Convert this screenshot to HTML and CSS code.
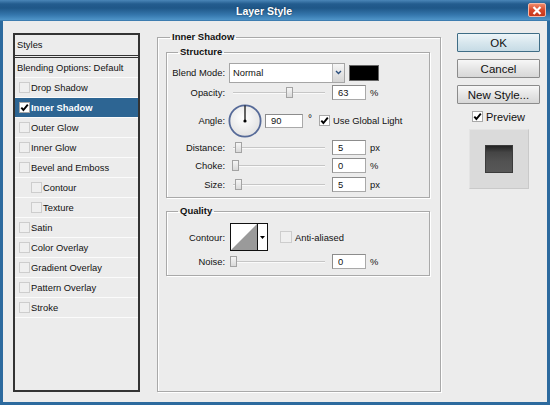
FILE: index.html
```html
<!DOCTYPE html>
<html lang="en">

<head>
    <meta charset="UTF-8">
    <meta name="viewport" content="width=device-width, initial-scale=1.0">
    <title>Layer Style</title>
    <link rel="stylesheet" href="styles.css">
</head>

<body>

    <div class="window">
        <div class="titlebar">
            <span class="title">Layer Style</span>
            <span class="close">
                <svg width="10" height="9" viewBox="0 0 10 9"><path d="M1.5 1 L8.5 8 M8.5 1 L1.5 8" stroke="#fff" stroke-width="2.2" fill="none"/></svg>
            </span>
        </div>

        <div class="content">
            <!-- Liste des styles -->
            <ul class="styles-list">
                <li class="head">Styles</li>
                <li class="blending">Blending Options: Default</li>
                <li><span class="cb"></span>Drop Shadow</li>
                <li class="selected"><span class="cb checked"><svg width="9" height="9" viewBox="0 0 9 9"><path d="M1.3 4.6 L3.4 7 L7.8 1.6" stroke="#000" stroke-width="1.9" fill="none"/></svg></span>Inner Shadow</li>
                <li><span class="cb"></span>Outer Glow</li>
                <li><span class="cb"></span>Inner Glow</li>
                <li><span class="cb"></span>Bevel and Emboss</li>
                <li class="sub"><span class="cb"></span>Contour</li>
                <li class="sub"><span class="cb"></span>Texture</li>
                <li><span class="cb"></span>Satin</li>
                <li><span class="cb"></span>Color Overlay</li>
                <li><span class="cb"></span>Gradient Overlay</li>
                <li><span class="cb"></span>Pattern Overlay</li>
                <li><span class="cb"></span>Stroke</li>
            </ul>

            <!-- Panneau Inner Shadow -->
            <fieldset class="group main-group">
                <legend>Inner Shadow</legend>

                <fieldset class="group structure">
                    <legend>Structure</legend>

                    <div class="field field-blend">
                        <label class="field-label">Blend Mode:</label>
                        <div class="select">
                            <span class="select-value">Normal</span>
                            <span class="select-arrow"><svg width="7" height="5" viewBox="0 0 7 5"><path d="M1 1 L3.5 3.5 L6 1" stroke="#2b4f7e" stroke-width="1.4" fill="none"/></svg></span>
                        </div>
                        <span class="swatch"></span>
                    </div>

                    <div class="field">
                        <label class="field-label">Opacity:</label>
                        <div class="slider"><span class="thumb" style="left: 57px"></span></div>
                        <input class="num" type="text" value="63">
                        <span class="unit">%</span>
                    </div>

                    <div class="field field-angle">
                        <label class="field-label">Angle:</label>
                        <svg class="dial" width="34" height="34" viewBox="0 0 34 34">
                            <defs>
                                <radialGradient id="dialFill" cx="0.45" cy="0.4" r="0.6">
                                    <stop offset="0" stop-color="#ffffff"/>
                                    <stop offset="1" stop-color="#e2e2e2"/>
                                </radialGradient>
                            </defs>
                            <circle cx="17" cy="17" r="15.6" fill="url(#dialFill)" stroke="#566a98" stroke-width="1.8"/>
                            <line x1="17" y1="17" x2="17" y2="1.5" stroke="#000" stroke-width="1.2"/>
                            <circle cx="17" cy="17" r="1.6" fill="#000"/>
                        </svg>
                        <input class="num num-angle" type="text" value="90">
                        <span class="unit deg">°</span>
                        <span class="cb cb-light checked"><svg width="9" height="9" viewBox="0 0 9 9"><path d="M1.3 4.6 L3.4 7 L7.8 1.6" stroke="#000" stroke-width="1.9" fill="none"/></svg></span>
                        <span class="check-label">Use Global Light</span>
                    </div>

                    <div class="field">
                        <label class="field-label">Distance:</label>
                        <div class="slider"><span class="thumb" style="left: 6px"></span></div>
                        <input class="num" type="text" value="5">
                        <span class="unit">px</span>
                    </div>

                    <div class="field field-choke">
                        <label class="field-label">Choke:</label>
                        <div class="slider"><span class="thumb" style="left: 3px"></span></div>
                        <input class="num" type="text" value="0">
                        <span class="unit">%</span>
                    </div>

                    <div class="field field-size">
                        <label class="field-label">Size:</label>
                        <div class="slider"><span class="thumb" style="left: 6px"></span></div>
                        <input class="num" type="text" value="5">
                        <span class="unit">px</span>
                    </div>
                </fieldset>

                <fieldset class="group quality">
                    <legend>Quality</legend>

                    <div class="field field-contour">
                        <label class="field-label">Contour:</label>
                        <div class="contour">
                            <svg class="contour-curve" width="26" height="26" viewBox="0 0 26 26"><polygon points="0,26 26,0 26,26" fill="#9a9a9a"/></svg>
                            <span class="contour-arrow"><svg width="5" height="3" viewBox="0 0 5 3"><polygon points="0,0 5,0 2.5,3" fill="#000"/></svg></span>
                        </div>
                        <span class="cb cb-aa"></span>
                        <span class="check-label">Anti-aliased</span>
                    </div>

                    <div class="field field-noise">
                        <label class="field-label">Noise:</label>
                        <div class="slider"><span class="thumb" style="left: 1px"></span></div>
                        <input class="num" type="text" value="0">
                        <span class="unit">%</span>
                    </div>
                </fieldset>
            </fieldset>

            <!-- Boutons -->
            <div class="actions">
                <button type="button" class="btn btn-ok">OK</button>
                <button type="button" class="btn">Cancel</button>
                <button type="button" class="btn">New Style...</button>
                <div class="preview-toggle">
                    <span class="cb cb-light checked"><svg width="9" height="9" viewBox="0 0 9 9"><path d="M1.3 4.6 L3.4 7 L7.8 1.6" stroke="#000" stroke-width="1.9" fill="none"/></svg></span>
                    <span class="preview-label">Preview</span>
                </div>
                <div class="preview-box">
                    <div class="preview-swatch"></div>
                </div>
            </div>
        </div>
    </div>

</body>
</html>
```

FILE: styles.css
```css
body {
    margin: 0;
    font-family: "Liberation Sans", Arial, sans-serif;
    font-size: 9.4px;
    color: #111;
    background-color: #ececec;
}

.window {
    width: 550px;
    height: 405px;
    display: flex;
    flex-direction: column;
    overflow: hidden;
}

/* Barre de titre */
.titlebar {
    height: 21px;
    flex-shrink: 0;
    display: flex;
    align-items: center;
    justify-content: center;
    padding-right: 22px;
    background: linear-gradient(to bottom, #4a86b8 0px, #235c8e 4px, #1f5788 8px, #3577ad 15px, #4f95c9 20px, #2c6597 21px);
    position: relative;
}

.title {
    color: #fff;
    font-weight: bold;
    font-size: 10.5px;
    text-shadow: 0 0 2px rgba(0, 0, 0, 0.5);
}

.close {
    position: absolute;
    right: 4px;
    top: 3px;
    width: 18px;
    height: 14px;
    box-sizing: border-box;
    border: 1px solid #f3b8a8;
    border-radius: 2px;
    background: linear-gradient(to bottom, #f08a6a, #d9482a 50%, #c4381c);
    display: flex;
    align-items: center;
    justify-content: center;
}

.content {
    flex: 1;
    display: flex;
    align-items: flex-start;
    padding: 10px 0 0 10px;
    border: 3px solid #2c6a9e;
    border-top: none;
    background-color: #ececec;
}

/* Liste des styles */
.styles-list {
    list-style: none;
    margin: 2px 17px 0 0;
    padding: 0;
    width: 127px;
    height: 359px;
    box-sizing: border-box;
    border: 2px solid #333;
    background-color: #ececec;
}

.styles-list li {
    height: 19px;
    line-height: 19px;
    border-bottom: 1px solid #fbfbfb;
    padding-left: 4px;
    display: flex;
    align-items: center;
    white-space: nowrap;
}

.styles-list li.head {
    height: 19px;
    padding-left: 2px;
    padding-bottom: 1px;
    border-bottom: 3px double #333;
}

.styles-list li.blending {
    padding-left: 2px;
}

.styles-list li.sub {
    padding-left: 16px;
}

.styles-list li.selected {
    background-color: #2d6593;
    color: #fff;
    font-weight: bold;
}

.cb {
    width: 11px;
    height: 11px;
    box-sizing: border-box;
    border: 1px solid #cdcdcd;
    background-color: #efefef;
    margin-right: 1px;
    flex-shrink: 0;
    display: flex;
    align-items: center;
    justify-content: center;
}

.cb.checked {
    background-color: #fff;
    border-color: #a8a8a8;
}

/* Groupes */
.group {
    margin: 0;
    border: 1px solid #a9a9a9;
    box-shadow: 1px 1px 0 #fff, inset 1px 1px 0 #fff;
    box-sizing: border-box;
}

.group legend {
    font-weight: bold;
    font-size: 9.5px;
    line-height: 12px;
    padding: 0 2px;
}

.main-group {
    width: 284px;
    height: 361px;
    margin-right: 16px;
    padding: 3px 9px 0 8px;
}

.main-group > legend {
    margin-left: 4px;
}

.structure,
.quality {
    width: 264px;
    padding: 5px 0 5px 4px;
}

.structure > legend,
.quality > legend {
    margin-left: 7px;
}

.quality {
    margin-top: 7px;
    padding-top: 6px;
    padding-bottom: 6px;
}

/* Lignes du formulaire */
.field {
    display: flex;
    align-items: center;
    height: 15px;
    margin-top: 3px;
}

.field-label {
    width: 54px;
    margin-right: 4px;
    text-align: right;
    flex-shrink: 0;
}

.field-blend {
    height: 19px;
    margin-top: 0;
}

.field-angle {
    height: 33px;
    margin-top: 4px;
}

.field-choke {
    margin-top: 3px;
}

.field-size {
    margin-top: 4px;
}

.select {
    width: 116px;
    height: 20px;
    box-sizing: border-box;
    border: 1px solid #a5a5a5;
    background-color: #fff;
    display: flex;
    align-items: center;
}

.select-value {
    flex: 1;
    padding-left: 3px;
}

.select-arrow {
    width: 12px;
    height: 100%;
    box-sizing: border-box;
    border-left: 1px solid #b9b9b9;
    background: linear-gradient(to bottom, #f6f6f6, #d5d5d5);
    display: flex;
    align-items: center;
    justify-content: center;
}

.swatch {
    width: 28px;
    height: 14px;
    margin-left: 4px;
    background-color: #000;
    border: 1px solid #666;
}

.slider {
    width: 100px;
    height: 15px;
    position: relative;
    flex-shrink: 0;
}

.slider::before {
    content: "";
    position: absolute;
    left: 4px;
    right: 4px;
    top: 7px;
    height: 1px;
    background-color: #c6c6c6;
    border-bottom: 1px solid #fafafa;
}

.thumb {
    position: absolute;
    top: 2px;
    width: 7px;
    height: 11px;
    box-sizing: border-box;
    border: 1px solid #a3a3a3;
    background: linear-gradient(to bottom, #f6f6f6, #d9d9d9);
}

.num {
    width: 34px;
    height: 15px;
    box-sizing: border-box;
    margin: 0 0 0 3px;
    padding: 0 0 0 5px;
    border: 1px solid #a9a9a9;
    border-top-color: #8c8c8c;
    border-left-color: #8c8c8c;
    background-color: #fff;
    font-family: inherit;
    font-size: 9.4px;
    color: #111;
    outline: none;
}

.unit {
    margin-left: 4px;
}

.dial {
    margin-left: -1px;
    flex-shrink: 0;
}

.num-angle {
    width: 38px;
    height: 14px;
    margin-left: 3px;
}

.deg {
    margin-left: 5px;
    align-self: flex-start;
    margin-top: 9px;
    font-size: 10px;
}

.field-angle .cb {
    margin-left: 7px;
}

.check-label {
    margin-left: 2px;
    white-space: nowrap;
}

/* Qualité */
.field-contour {
    height: 28px;
    margin-top: 0;
}

.contour {
    width: 38px;
    height: 28px;
    margin-left: 1px;
    box-sizing: border-box;
    border: 1px solid #111;
    background-color: #fff;
    display: flex;
}

.contour-curve {
    display: block;
}

.contour-arrow {
    flex: 1;
    border-left: 1px solid #111;
    display: flex;
    align-items: center;
    justify-content: center;
}

.cb-aa {
    margin-left: 12px;
    width: 12px;
    height: 12px;
}

.field-noise {
    margin-top: 3px;
}

/* Boutons */
.actions {
    width: 83px;
    margin-top: 2px;
    display: flex;
    flex-direction: column;
    align-items: center;
}

.btn {
    width: 83px;
    height: 19px;
    margin: 0 0 7px 0;
    padding: 0;
    border: 1px solid #8b8b8b;
    border-radius: 1px;
    background: linear-gradient(to bottom, #f7f7f7, #e6e6e6 50%, #d7d7d7);
    font-family: inherit;
    font-size: 11.5px;
    color: #111;
    cursor: pointer;
}

.btn-ok {
    border-color: #3f6d86;
    background: linear-gradient(to bottom, #eef5f8, #d8e7ee 50%, #c6dbe5);
}

.preview-toggle {
    display: flex;
    align-items: center;
    height: 11px;
    margin-top: 0;
}

.preview-label {
    margin-left: 2px;
    font-size: 11px;
}

.preview-box {
    width: 60px;
    height: 60px;
    margin-top: 7px;
    box-sizing: border-box;
    border: 1px solid #e4e4e4;
    border-right-color: #c9c9c9;
    border-bottom-color: #c9c9c9;
    background-color: #dadada;
    display: flex;
    align-items: center;
    justify-content: center;
}

.preview-swatch {
    width: 28px;
    height: 28px;
    box-sizing: border-box;
    border: 1px solid #3b3b3b;
    background: linear-gradient(to bottom, #232323, #454545 25%, #525252 60%, #575757);
}
```
